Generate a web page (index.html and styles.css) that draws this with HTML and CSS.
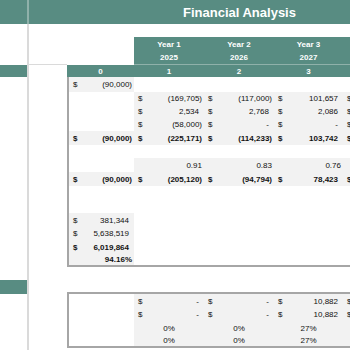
FILE: index.html
```html
<!DOCTYPE html>
<html lang="en">
<head>
<meta charset="utf-8">
<title>Financial Analysis</title>
<link rel="stylesheet" href="styles.css">
</head>
<body>
<div class="sheet">
  <div class="row h24">
    <div class="c t"></div>
    <div class="c title">Financial Analysis</div>
  </div>
  <div class="row h13">
    <div class="c"></div><div class="c gl"></div><div class="c"></div><div class="c"></div><div class="c"></div><div class="c"></div><div class="c"></div>
  </div>
  <div class="row h14">
    <div class="c"></div><div class="c gl"></div><div class="c"></div>
    <div class="c t hd">Year 1</div><div class="c t hd">Year 2</div><div class="c t hd">Year 3</div><div class="c t hd"></div>
  </div>
  <div class="row h14">
    <div class="c"></div><div class="c gl gb"></div><div class="c"></div>
    <div class="c t hd tl">2025</div><div class="c t hd tl">2026</div><div class="c t hd tl">2027</div><div class="c t hd tl"></div>
  </div>
  <div class="row h12">
    <div class="c t"></div><div class="c gl"></div>
    <div class="c t hd">0</div><div class="c t hd">1</div><div class="c t hd">2</div><div class="c t hd">3</div><div class="c t hd"></div>
  </div>

  <div class="row h15">
    <div class="c"></div><div class="c gl"></div>
    <div class="c bx g num low"><span>$</span><span>(90,000)</span></div>
    <div class="c"></div><div class="c"></div><div class="c"></div><div class="c"></div>
  </div>
  <div class="row h13">
    <div class="c"></div><div class="c gl"></div><div class="c bx"></div>
    <div class="c g num"><span>$</span><span>(169,705)</span></div>
    <div class="c g num"><span>$</span><span>(117,000)</span></div>
    <div class="c g num pos"><span>$</span><span>101,657</span></div>
    <div class="c g num"><span>$</span></div>
  </div>
  <div class="row h13">
    <div class="c"></div><div class="c gl"></div><div class="c bx"></div>
    <div class="c g num pos"><span>$</span><span>2,534</span></div>
    <div class="c g num pos"><span>$</span><span>2,768</span></div>
    <div class="c g num pos"><span>$</span><span>2,086</span></div>
    <div class="c g num"><span>$</span></div>
  </div>
  <div class="row h13">
    <div class="c"></div><div class="c gl"></div><div class="c bx"></div>
    <div class="c g num"><span>$</span><span>(58,000)</span></div>
    <div class="c g num dash"><span>$</span><span>-</span></div>
    <div class="c g num dash"><span>$</span><span>-</span></div>
    <div class="c g num"><span>$</span></div>
  </div>
  <div class="row h14 bold">
    <div class="c"></div><div class="c gl"></div>
    <div class="c bx g num"><span>$</span><span>(90,000)</span></div>
    <div class="c g num"><span>$</span><span>(225,171)</span></div>
    <div class="c g num"><span>$</span><span>(114,233)</span></div>
    <div class="c g num pos"><span>$</span><span>103,742</span></div>
    <div class="c g num"><span>$</span></div>
  </div>
  <div class="row h13">
    <div class="c"></div><div class="c gl"></div><div class="c bx"></div><div class="c"></div><div class="c"></div><div class="c"></div><div class="c"></div>
  </div>
  <div class="row h14">
    <div class="c"></div><div class="c gl"></div><div class="c bx"></div>
    <div class="c g pct">0.91</div>
    <div class="c g pct">0.83</div>
    <div class="c g pct">0.76</div>
    <div class="c g"></div>
  </div>
  <div class="row h14 bold">
    <div class="c"></div><div class="c gl"></div>
    <div class="c bx g num"><span>$</span><span>(90,000)</span></div>
    <div class="c g num"><span>$</span><span>(205,120)</span></div>
    <div class="c g num"><span>$</span><span>(94,794)</span></div>
    <div class="c g num pos"><span>$</span><span>78,423</span></div>
    <div class="c g num"><span>$</span></div>
  </div>
  <div class="row h13">
    <div class="c"></div><div class="c gl"></div><div class="c bx"></div><div class="c"></div><div class="c"></div><div class="c"></div><div class="c"></div>
  </div>
  <div class="row h14">
    <div class="c"></div><div class="c gl"></div><div class="c bx"></div><div class="c"></div><div class="c"></div><div class="c"></div><div class="c"></div>
  </div>
  <div class="row h14">
    <div class="c"></div><div class="c gl"></div>
    <div class="c bx g num pos"><span>$</span><span>381,344</span></div>
    <div class="c"></div><div class="c"></div><div class="c"></div><div class="c"></div>
  </div>
  <div class="row h13">
    <div class="c"></div><div class="c gl"></div>
    <div class="c bx g num pos"><span>$</span><span>5,638,519</span></div>
    <div class="c"></div><div class="c"></div><div class="c"></div><div class="c"></div>
  </div>
  <div class="row h14 bold">
    <div class="c"></div><div class="c gl"></div>
    <div class="c bx g num pos"><span>$</span><span>6,019,864</span></div>
    <div class="c"></div><div class="c"></div><div class="c"></div><div class="c"></div>
  </div>
  <div class="row h13 bold">
    <div class="c"></div><div class="c gl"></div>
    <div class="c bx g pct bb">94.16%</div>
    <div class="c bb"></div><div class="c bb"></div><div class="c bb"></div><div class="c bb"></div>
  </div>

  <div class="row h13">
    <div class="c"></div><div class="c gl"></div><div class="c"></div><div class="c"></div><div class="c"></div><div class="c"></div><div class="c"></div>
  </div>
  <div class="row h14">
    <div class="c t"></div><div class="c gl"></div>
    <div class="c bb"></div><div class="c bb"></div><div class="c bb"></div><div class="c bb"></div><div class="c bb"></div>
  </div>
  <div class="row h14">
    <div class="c"></div><div class="c gl"></div><div class="c bx"></div>
    <div class="c g num dash"><span>$</span><span>-</span></div>
    <div class="c g num dash"><span>$</span><span>-</span></div>
    <div class="c g num pos"><span>$</span><span>10,882</span></div>
    <div class="c g num"><span>$</span></div>
  </div>
  <div class="row h13">
    <div class="c"></div><div class="c gl"></div><div class="c bx"></div>
    <div class="c g num dash"><span>$</span><span>-</span></div>
    <div class="c g num dash"><span>$</span><span>-</span></div>
    <div class="c g num pos"><span>$</span><span>10,882</span></div>
    <div class="c g num"><span>$</span></div>
  </div>
  <div class="row h14">
    <div class="c"></div><div class="c gl"></div><div class="c bx"></div>
    <div class="c g ctr">0%</div>
    <div class="c g ctr">0%</div>
    <div class="c g ctr">27%</div>
    <div class="c g"></div>
  </div>
  <div class="row h13">
    <div class="c"></div><div class="c gl"></div>
    <div class="c bx bb"></div>
    <div class="c g ctr bb">0%</div>
    <div class="c g ctr bb">0%</div>
    <div class="c g ctr bb">27%</div>
    <div class="c g bb"></div>
  </div>
  <div class="row h2">
    <div class="c"></div><div class="c gl"></div><div class="c"></div><div class="c"></div><div class="c"></div><div class="c"></div><div class="c"></div>
  </div>
</div>
</body>
</html>
```

FILE: styles.css
```css
html, body {
  margin: 0;
  padding: 0;
  background: #ffffff;
}

body {
  font-family: "Liberation Sans", Arial, sans-serif;
  font-size: 8px;
  color: #111111;
}

.sheet {
  width: 350px;
  height: 350px;
  overflow: hidden;
}

.row {
  display: grid;
  grid-template-columns: 27px 40px 67px 70px 70px 69px 7px;
  height: 13px;
}

.h2 { height: 2px; }
.h12 { height: 12px; }
.h13 { height: 13px; }
.h14 { height: 14px; }
.h15 { height: 15px; }
.h24 { height: 24px; }

.bold { font-weight: bold; }

.c {
  box-sizing: border-box;
  display: flex;
  align-items: center;
  min-width: 0;
  overflow: hidden;
  white-space: nowrap;
}

.low { padding-top: 2px; }

.t { background: #588c82; }
.g { background: #f2f2f2; }

.gl { border-left: 2px solid #dadada; }
.gb { border-bottom: 1px solid #dadada; }
.bx { border-left: 2px solid #a6a6a6; }
.bb { border-bottom: 2px solid #a6a6a6; }
.tl { border-bottom: 1px solid #8fb1aa; }

.title {
  grid-column: 2 / -1;
  background: #588c82;
  border-left: 2px solid #8fb1aa;
  color: #ffffff;
  font-size: 13px;
  font-weight: bold;
  padding-left: 154px;
  padding-top: 1px;
}

.hd {
  color: #ffffff;
  font-weight: bold;
  justify-content: center;
}

.num {
  justify-content: space-between;
  padding: 0 2px 0 4px;
}

.num.pos { padding-right: 5px; }
.num.dash { padding-right: 5px; }

.pct {
  justify-content: flex-end;
  padding-right: 2px;
}

.ctr { justify-content: center; }
```
